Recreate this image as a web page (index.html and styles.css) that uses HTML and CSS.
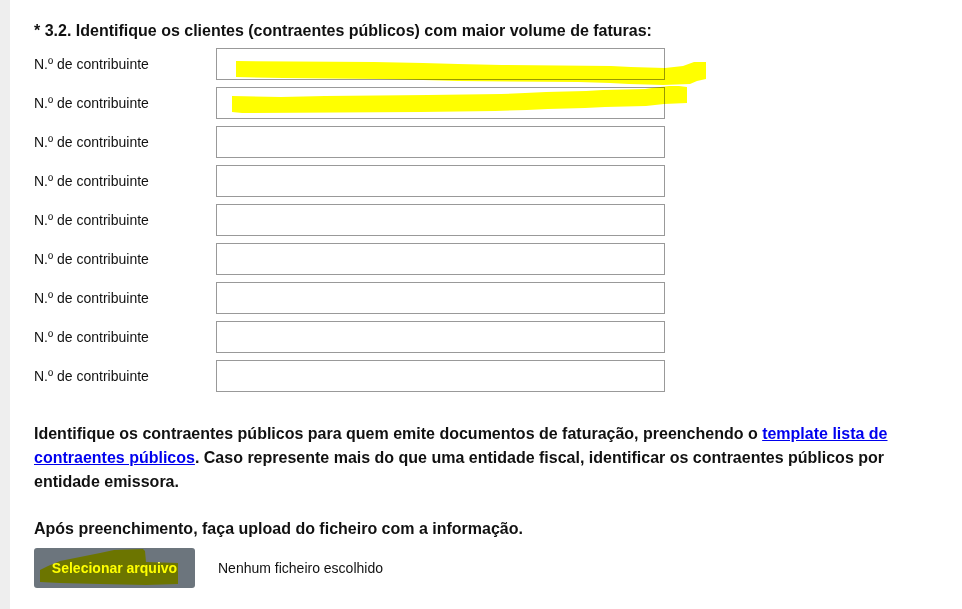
FILE: index.html
```html
<!DOCTYPE html>
<html lang="pt">
<head>
<meta charset="utf-8">
<title>Contraentes públicos</title>
<link rel="stylesheet" href="styles.css">
</head>
<body>
<div class="page">
  <aside class="side"></aside>
  <main class="content">
    <h2 class="question">* 3.2. Identifique os clientes (contraentes públicos) com maior volume de faturas:</h2>
    <div class="fields">
      <label class="lbl">N.º de contribuinte</label><input class="inp" type="text">
      <label class="lbl">N.º de contribuinte</label><input class="inp" type="text">
      <label class="lbl">N.º de contribuinte</label><input class="inp" type="text">
      <label class="lbl">N.º de contribuinte</label><input class="inp" type="text">
      <label class="lbl">N.º de contribuinte</label><input class="inp" type="text">
      <label class="lbl">N.º de contribuinte</label><input class="inp" type="text">
      <label class="lbl">N.º de contribuinte</label><input class="inp" type="text">
      <label class="lbl">N.º de contribuinte</label><input class="inp" type="text">
      <label class="lbl">N.º de contribuinte</label><input class="inp" type="text">
    </div>
    <p class="info">Identifique os contraentes públicos para quem emite documentos de faturação, preenchendo o <a href="#" class="link">template lista de contraentes públicos</a>. Caso represente mais do que uma entidade fiscal, identificar os contraentes públicos por entidade emissora.</p>
    <p class="after">Após preenchimento, faça upload do ficheiro com a informação.</p>
    <div class="upload">
      <button class="btn" type="button">Selecionar arquivo</button>
      <span class="nofile">Nenhum ficheiro escolhido</span>
    </div>
  </main>
</div>
<svg class="marks" width="962" height="609" viewBox="0 0 962 609" aria-hidden="true">
  <polygon fill="#ffff00" points="236,61 374,62 423,63 458,64 502,65 611,66 631,67 665,68 683,66 694,62 706,62 706,79 697,81 690,84 663,85 629,84 610,83 578,82 458,81 423,80 380,79 283,78 236,77"/>
  <polygon fill="#ffff00" points="232,96 281,97 325,96 428,95 501,94 525,93 546,92 586,91 603,90 645,89 652,88 669,86 679,86 687,87 687,103 664,104 646,106 605,107 585,108 548,109 527,110 495,111 421,112 242,113 232,112"/>
  <polygon fill="#ffff00" points="40,570 48,566 60,561 80,557 100,553 114,550 143,549 145,551 146,562 178,563 178,584 146,585 100,584 60,583 40,582"/>
</svg>
</body>
</html>
```

FILE: styles.css
```css
html, body {
  margin: 0;
  padding: 0;
  background: #ffffff;
}
body {
  font-family: "Liberation Sans", Arial, sans-serif;
  color: #111;
  width: 962px;
  height: 609px;
  overflow: hidden;
  position: relative;
}
.page {
  display: flex;
  min-height: 609px;
}
.side {
  width: 10px;
  flex: none;
  background: #eeeeee;
}
.content {
  padding-left: 24px;
  width: 900px;
}
.question {
  margin: 19px 0 5px;
  font-size: 16px;
  line-height: 24px;
  font-weight: bold;
}
.fields {
  display: grid;
  grid-template-columns: 182px 449px;
  row-gap: 7px;
  align-items: center;
}
.lbl {
  font-size: 14px;
  line-height: 16px;
}
.inp {
  box-sizing: border-box;
  height: 32px;
  width: 449px;
  margin: 0;
  border: 1px solid #999999;
  background: #fff;
  font: 14px "Liberation Sans", Arial, sans-serif;
}
.info {
  margin: 30px 0 0;
  font-size: 16px;
  line-height: 24px;
  font-weight: bold;
}
.link {
  color: #0000ee;
  text-decoration: underline;
}
.after {
  margin: 23px 0 0;
  font-size: 16px;
  line-height: 24px;
  font-weight: bold;
}
.upload {
  display: flex;
  align-items: center;
  gap: 23px;
  margin-top: 7px;
}
.btn {
  width: 161px;
  height: 40px;
  border: none;
  border-radius: 3px;
  background: #6c757d;
  color: #ffffff;
  font: bold 14px "Liberation Sans", Arial, sans-serif;
  padding: 0;
}
.nofile {
  font-size: 14px;
  color: #111;
}
.marks {
  position: absolute;
  left: 0;
  top: 0;
  pointer-events: none;
  mix-blend-mode: multiply;
}
```
